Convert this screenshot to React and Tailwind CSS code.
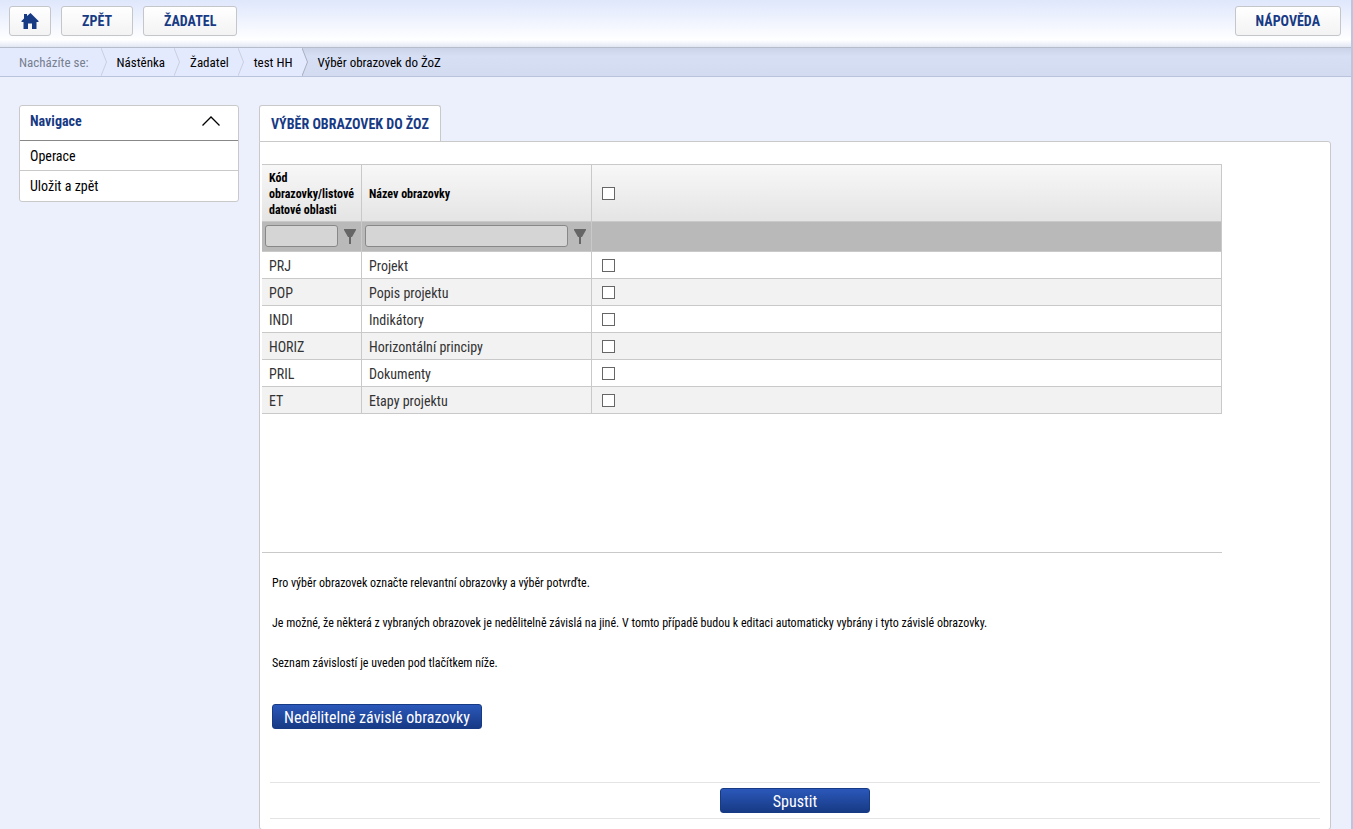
import { useState } from 'react';

const CRUMBS = ['Nástěnka', 'Žadatel', 'test HH'];

const SCREENS = [
  { code: 'PRJ', name: 'Projekt' },
  { code: 'POP', name: 'Popis projektu' },
  { code: 'INDI', name: 'Indikátory' },
  { code: 'HORIZ', name: 'Horizontální principy' },
  { code: 'PRIL', name: 'Dokumenty' },
  { code: 'ET', name: 'Etapy projektu' },
];

function HomeIcon() {
  return (
    <svg viewBox="0 0 18 16" className="h-4 w-[18px]" fill="#173a85" aria-hidden="true">
      <path d="M9.500 0 6 3V1H3v4.500L.5 8v1H2.500v7H7v-5.500h4V16h4.500V9h2V8z" />
    </svg>
  );
}

function FilterIcon() {
  return (
    <svg viewBox="0 0 12 15" className="h-[15px] w-3" fill="#666" aria-hidden="true">
      <path d="M0 0h12v1L8 8H7v7H5V8H4L0 1z" />
    </svg>
  );
}

function CrumbArrow({ active }) {
  return (
    <svg viewBox="0 0 6 28" className="h-7 w-[6px] shrink-0" aria-hidden="true">
      {active && <path d="M0 0 5.500 14 0 28z" fill="#e4eafd" />}
      <path d="M0 0 5.500 14 0 28" fill="none" stroke={active ? '#a9afc2' : '#c9cfe0'} />
    </svg>
  );
}

function TopButton({ children, className = 'px-5', label }) {
  return (
    <button
      type="button"
      aria-label={label}
      className={`flex h-[30px] items-center rounded-[3px] border border-[#c5c6ca] bg-linear-to-b from-white to-[#f3f3f3] text-sm font-bold text-[#173a85] ${className}`}
    >
      {children}
    </button>
  );
}

function BlueButton({ children, className }) {
  return (
    <button
      type="button"
      className={`block h-[25px] rounded-[3px] border border-[#173a85] bg-linear-to-b from-[#2b58ba] to-[#173a85] pt-px text-base leading-6 text-white ${className}`}
    >
      {children}
    </button>
  );
}

function Tick({ label, checked, onChange }) {
  return (
    <input
      type="checkbox"
      aria-label={label}
      checked={checked}
      onChange={onChange}
      className="block size-[13px] appearance-none border border-[#666] bg-white checked:bg-[#173a85]"
    />
  );
}

function FilterCell({ label }) {
  return (
    <td className="border-r border-b border-[#c9c9c9] px-[3px] pt-0 pb-px">
      <div className="flex items-center gap-[6px]">
        <input
          type="text"
          aria-label={label}
          className="h-[22px] min-w-0 flex-1 rounded-[3px] border border-[#888] bg-[#d5d5d5] px-1"
        />
        <button type="button" aria-label={`Filtr: ${label}`} className="pr-[2px]">
          <FilterIcon />
        </button>
      </div>
    </td>
  );
}

function ScreensTable() {
  const [selected, setSelected] = useState([]);
  const all = selected.length === SCREENS.length;

  const toggle = (code) =>
    setSelected((prev) => (prev.includes(code) ? prev.filter((c) => c !== code) : [...prev, code]));

  return (
    <table className="w-full table-fixed border-separate border-spacing-0 text-left">
      <colgroup>
        <col className="w-[100px]" />
        <col className="w-[230px]" />
        <col />
      </colgroup>
      <thead>
        <tr className="h-[58px] bg-linear-to-b from-[#f8f8f8] to-[#e4e4e4] text-xs leading-4">
          <th className="border-y border-r border-[#c9c9c9] pt-[2px] pb-0 pl-[7px] font-bold">
            Kód obrazovky/listové datové oblasti
          </th>
          <th className="border-y border-r border-[#c9c9c9] pt-[2px] pb-0 pl-[7px] font-bold">Název obrazovky</th>
          <th className="border-y border-r border-[#c9c9c9] py-0 pl-[10px]">
            <Tick
              label="Vybrat vše"
              checked={all}
              onChange={() => setSelected(all ? [] : SCREENS.map((s) => s.code))}
            />
          </th>
        </tr>
        <tr className="h-[30px] bg-[#b9b9b9]">
          <FilterCell label="Kód obrazovky" />
          <FilterCell label="Název obrazovky" />
          <td className="border-r border-b border-[#c9c9c9]" />
        </tr>
      </thead>
      <tbody className="text-sm leading-5 text-[#333]">
        {SCREENS.map((s) => (
          <tr key={s.code} className="h-[27px] even:bg-[#f2f2f2]">
            <td className="border-r border-b border-[#c9c9c9] pt-[2px] pb-0 pl-[7px]">{s.code}</td>
            <td className="border-r border-b border-[#c9c9c9] pt-[2px] pb-0 pl-[7px]">{s.name}</td>
            <td className="border-r border-b border-[#c9c9c9] py-0 pl-[10px]">
              <Tick label={s.name} checked={selected.includes(s.code)} onChange={() => toggle(s.code)} />
            </td>
          </tr>
        ))}
      </tbody>
    </table>
  );
}

export default function App() {
  return (
    <div className="min-h-screen border-r-2 border-[#bcc4de] bg-[#ecf0fd] font-['Roboto_Condensed','Liberation_Sans_Narrow',Roboto,sans-serif] text-black">
      <header className="flex h-[47px] items-start gap-[10px] bg-linear-to-b from-[#dfe7fc] via-white via-85% to-[#e2e7f5] pt-[6px] pr-[10px] pl-[9px]">
        <TopButton className="px-[11px]" label="Domů">
          <HomeIcon />
        </TopButton>
        <TopButton>ZPĚT</TopButton>
        <TopButton>ŽADATEL</TopButton>
        <TopButton className="ml-auto px-5">NÁPOVĚDA</TopButton>
      </header>

      <nav
        aria-label="Nacházíte se"
        className="flex h-[30px] items-center border-y border-t-[#b7bccb] border-b-[#b9c3dc] bg-linear-to-b from-[#cbd3e8] via-[#d7dff4] via-30% to-[#d3dbf0] text-[13px]"
      >
        <span className="flex h-full items-center bg-[#e4eafd] pt-px pr-3 pl-[19px] text-[#76808f]">Nacházíte se:</span>
        {CRUMBS.map((crumb) => (
          <span key={crumb} className="flex h-full items-center bg-[#e4eafd]">
            <CrumbArrow />
            <a href="#" className="pt-px pr-[9px] pl-[10px]">
              {crumb}
            </a>
          </span>
        ))}
        <CrumbArrow active />
        <span className="pt-px pl-[10px]">Výběr obrazovek do ŽoZ</span>
      </nav>

      <div className="flex items-start gap-5 pt-7 pr-5 pl-[19px]">
        <aside className="w-[220px] shrink-0 rounded-[3px] border border-[#c9c9c9] bg-white">
          <button
            type="button"
            className="flex h-[35px] w-full items-center justify-between border-b border-[#888] pr-[18px] pb-1 pl-[10px] text-sm font-bold text-[#173a85]"
          >
            Navigace
            <svg viewBox="0 0 18 10" className="h-[10px] w-[18px]" fill="none" stroke="#000" strokeWidth="1.300">
              <path d="M.5 9.500 9 1l8.500 8.500" />
            </svg>
          </button>
          <a href="#" className="flex h-[30px] items-center border-b border-[#c9c9c9] pl-[10px] text-sm">
            Operace
          </a>
          <a href="#" className="flex h-[30px] items-center pl-[10px] text-sm">
            Uložit a zpět
          </a>
        </aside>

        <main className="min-w-0 flex-1">
          <h1 className="flex h-9 w-fit items-center rounded-t-[3px] border border-b-0 border-[#c9c9c9] bg-white px-[11px] pt-px text-sm font-bold text-[#173a85]">
            VÝBĚR OBRAZOVEK DO ŽOZ
          </h1>
          <section className="rounded-[3px] rounded-tl-none border border-[#c9c9c9] bg-white pt-[22px] pb-[10px]">
            <div className="ml-[2px] min-h-[389px] w-[960px] max-w-full border-b border-[#c9c9c9]">
              <ScreensTable />
            </div>

            <div className="flex flex-col gap-5 pt-5 pl-3 text-xs leading-5">
              <p>Pro výběr obrazovek označte relevantní obrazovky a výběr potvrďte.</p>
              <p>
                Je možné, že některá z vybraných obrazovek je nedělitelně závislá na jiné. V tomto případě budou k
                editaci automaticky vybrány i tyto závislé obrazovky.
              </p>
              <p>Seznam závislostí je uveden pod tlačítkem níže.</p>
            </div>

            <BlueButton className="mt-[31px] ml-3 w-[210px]">Nedělitelně závislé obrazovky</BlueButton>

            <div className="mx-[10px] mt-[53px] flex h-[37px] items-center justify-center border-y border-[#e4e4e4]">
              <BlueButton className="w-[150px]">Spustit</BlueButton>
            </div>
          </section>
        </main>
      </div>
    </div>
  );
}
